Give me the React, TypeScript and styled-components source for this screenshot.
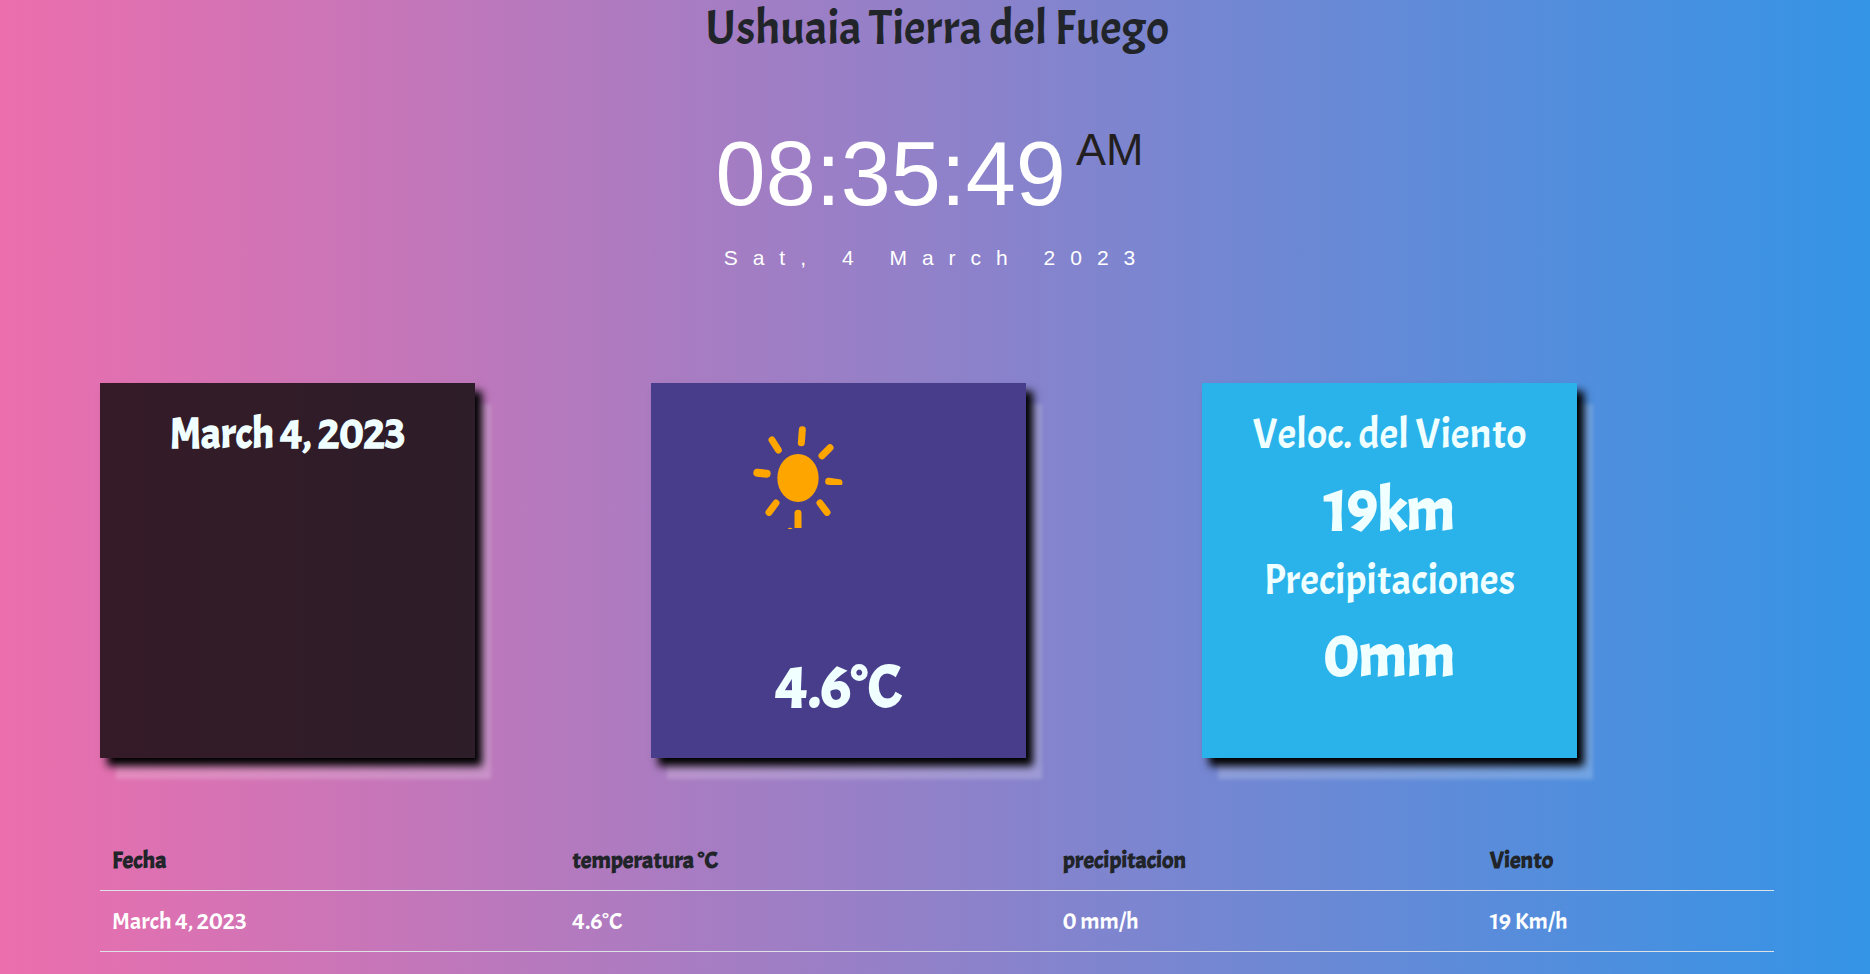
import React from "react";
import styled, { createGlobalStyle } from "styled-components";

const GlobalStyle = createGlobalStyle`
  *, *::before, *::after { box-sizing: border-box; }
  body {
    margin: 0;
    min-height: 100vh;
    color: #212529;
    font-family: Acme, "Liberation Sans Narrow", Lato, sans-serif;
    background: linear-gradient(to left, #3494e6, #ec6ead) fixed;
  }
`;

const Page = styled.main`
  padding: 0 96px 0 100px;
`;

const Title = styled.h1`
  margin: 0;
  font-size: 48px;
  line-height: 58px;
  font-weight: 500;
  text-align: center;
`;

const Clock = styled.section`
  display: flex;
  flex-direction: column;
  align-items: center;
  height: 325px;
  padding-top: 64px;
  font-family: "Liberation Sans", Arial, sans-serif;
  color: #fff;
`;

const Time = styled.time`
  display: flex;
  align-items: flex-start;
  gap: 10px;
  padding-right: 15px;
  font-size: 90px;
  line-height: 104px;
`;

const Meridiem = styled.span`
  font-size: 45px;
  line-height: 56px;
  color: #231f20;
`;

const Today = styled.time`
  margin-top: 20px;
  font-size: 21px;
  line-height: 24px;
  letter-spacing: 15px;
`;

const Cards = styled.section`
  display: grid;
  grid-template-columns: repeat(3, 1fr);
  padding-right: 21px;
`;

const Card = styled.article<{ $fill: string }>`
  display: flex;
  flex-direction: column;
  align-items: center;
  width: 375px;
  height: 375px;
  padding-top: 25px;
  color: azure;
  background: ${(p) => p.$fill};
  box-shadow: 7px 8px 8px #000, 16px 21px 4px rgba(255, 255, 255, 0.2);
`;

const CardLabel = styled.h2<{ $bold?: boolean }>`
  margin: 0;
  font-size: 42px;
  line-height: 54px;
  font-weight: ${(p) => (p.$bold ? 700 : 500)};
`;

const CardValue = styled.p`
  margin: 0;
  padding: 12px 0 8px;
  font-size: 60px;
  line-height: 72px;
  font-weight: 700;
`;

const SunIcon = styled.svg`
  width: 120px;
  height: 130px;
  margin: 2px 88px 99px 0;
  flex: none;
`;

const History = styled.table`
  width: 100%;
  margin-top: 72px;
  border-collapse: collapse;
  table-layout: fixed;
  font-size: 24px;
  line-height: 36px;
  text-align: left;

  th, td {
    padding: 12px;
    border-bottom: 1px solid #dee2e6;
  }
  th { font-weight: 700; }
  td { color: #fff; }
`;

const Column = styled.col<{ $share?: number }>`
  width: ${(p) => (p.$share ? `${p.$share}%` : "auto")};
`;

const rows = [["March 4, 2023", "4.6°C", "0 mm/h", "19 Km/h"]];

function Sun() {
  return (
    <SunIcon viewBox="0 0 360 390" aria-label="Soleado" role="img">
      <defs>
        <clipPath id="east"><rect x="260" y="190" width="80" height="35" /></clipPath>
        <clipPath id="south"><rect x="150" y="290" width="80" height="64" /></clipPath>
      </defs>
      <g stroke="orange" strokeWidth="21" strokeLinecap="round">
        <path d="M202 59 199 98" />
        <path d="M285 113 261 137" />
        <path d="M111 90 130 120" />
        <path d="M67 188 95 191" strokeWidth="24" />
        <path d="M123 279 102 307" />
        <path d="M255 279 276 307" />
        <path d="M281 214 312 218" clipPath="url(#east)" />
        <path d="M189 310 189.1 370" clipPath="url(#south)" />
      </g>
      <g fill="orange">
        <ellipse cx="189" cy="204" rx="62" ry="72" />
        <path d="M158 357Q160 353 165 353Q170 353 173 357Z" />
      </g>
    </SunIcon>
  );
}

export default function App() {
  return (
    <>
      <GlobalStyle />
      <Page>
        <Title>Ushuaia Tierra del Fuego</Title>
        <Clock>
          <Time>
            08:35:49<Meridiem>AM</Meridiem>
          </Time>
          <Today>Sat, 4 March 2023</Today>
        </Clock>
        <Cards>
          <Card $fill="rgba(9, 6, 5, 0.8)">
            <CardLabel $bold>March 4, 2023</CardLabel>
          </Card>
          <Card $fill="darkslateblue">
            <Sun />
            <CardValue>4.6°C</CardValue>
          </Card>
          <Card $fill="#2ab2eb">
            <CardLabel>Veloc. del Viento</CardLabel>
            <CardValue>19km</CardValue>
            <CardLabel>Precipitaciones</CardLabel>
            <CardValue>0mm</CardValue>
          </Card>
        </Cards>
        <History>
          <colgroup>
            <Column $share={27.5} />
            <Column $share={29.3} />
            <Column $share={25.5} />
            <Column />
          </colgroup>
          <thead>
            <tr>
              <th scope="col">Fecha</th>
              <th scope="col">temperatura °C</th>
              <th scope="col">precipitacion</th>
              <th scope="col">Viento</th>
            </tr>
          </thead>
          <tbody>
            {rows.map((row) => (
              <tr key={row[0]}>
                {row.map((cell) => (
                  <td key={cell}>{cell}</td>
                ))}
              </tr>
            ))}
          </tbody>
        </History>
      </Page>
    </>
  );
}
